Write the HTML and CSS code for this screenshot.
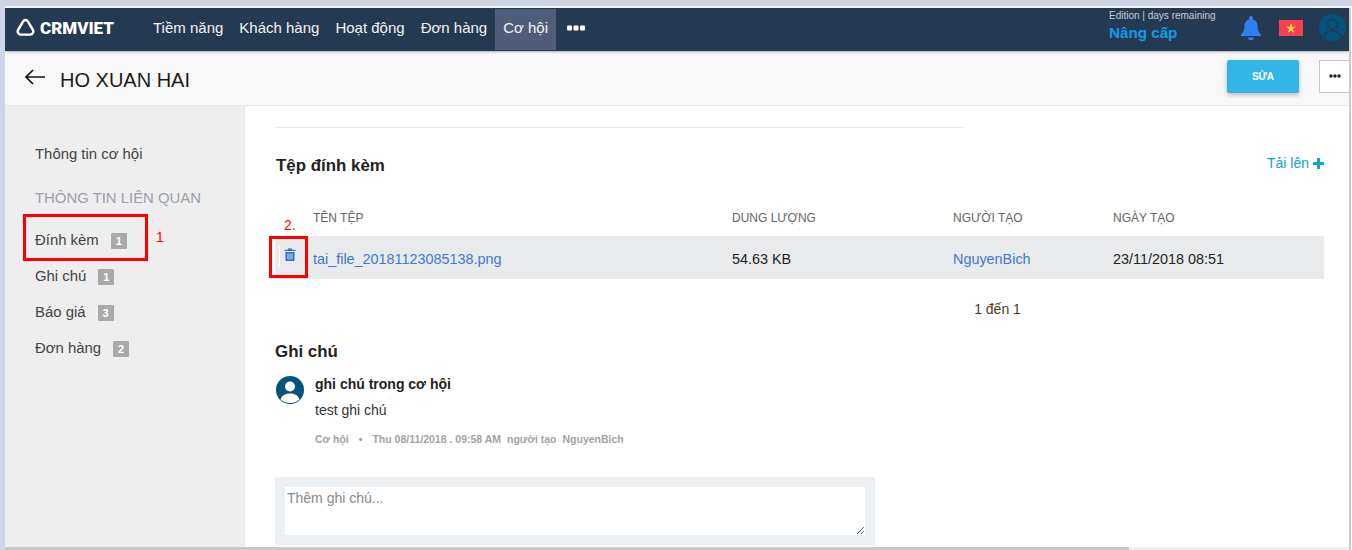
FILE: index.html
```html
<!DOCTYPE html>
<html lang="vi">
<head>
<meta charset="utf-8">
<title>CRMVIET</title>
<link rel="stylesheet" href="styles.css">
</head>
<body>
<div class="topstrip"></div>
<div class="app">
  <nav class="nav">
    <a class="logo">
      <svg class="logo-icon" width="19" height="19" viewBox="0 0 20 19"><path d="M10 1.6 C11.2 1.6 12 2.4 12.8 3.6 L17.6 11.6 C19 14.2 17.6 17 14.8 17 L5.2 17 C2.4 17 1 14.2 2.4 11.6 L7.2 3.6 C8 2.4 8.8 1.6 10 1.6 Z" fill="none" stroke="#fff" stroke-width="2.6"/></svg>
      <span class="logo-text">CRMVIET</span>
    </a>
    <div class="menu">
      <a class="menu-item">Tiềm năng</a>
      <a class="menu-item">Khách hàng</a>
      <a class="menu-item">Hoạt động</a>
      <a class="menu-item">Đơn hàng</a>
      <a class="menu-item active">Cơ hội</a>
      <a class="menu-item more"><svg width="18" height="6" viewBox="0 0 18 6"><rect x="0" y="0.5" width="5" height="5" rx="1" fill="#fff"/><rect x="6.5" y="0.5" width="5" height="5" rx="1" fill="#fff"/><rect x="13" y="0.5" width="5" height="5" rx="1" fill="#fff"/></svg></a>
    </div>
    <div class="nav-right">
      <div class="edition">
        <div class="edition-label">Edition | days remaining</div>
        <div class="upgrade">Nâng cấp</div>
      </div>
      <svg class="bell" width="22" height="26" viewBox="0 0 22 26"><path d="M11 1 C12.2 1 13 1.8 13 3 L13 4.4 C16.4 5.4 17.6 8.4 17.6 11.6 C17.6 15.6 19 17.6 21 19.4 L21 21 L1 21 L1 19.4 C3 17.6 4.4 15.6 4.4 11.6 C4.4 8.4 5.6 5.4 9 4.4 L9 3 C9 1.8 9.8 1 11 1 Z M8 22.4 L14 22.4 C14 24.2 12.6 25.2 11 25.2 C9.4 25.2 8 24.2 8 22.4 Z" fill="#2f7ff0"/></svg>
      <svg class="flag" width="24" height="16" viewBox="0 0 24 16"><rect width="24" height="16" fill="#f5424f"/><path d="M12 3 L13.2 6.7 L17 6.7 L13.9 9 L15.1 12.7 L12 10.4 L8.9 12.7 L10.1 9 L7 6.7 L10.8 6.7 Z" fill="#ffd84a"/></svg>
      <svg class="avatar-top" width="27" height="27" viewBox="0 0 27 27"><circle cx="13.5" cy="13.5" r="13.5" fill="#05527f"/><circle cx="13.5" cy="10.5" r="5" fill="none" stroke="#23394f" stroke-width="1.6"/><path d="M4.5 23 C6 18.4 9.5 17 13.5 17 C17.5 17 21 18.4 22.5 23" fill="none" stroke="#23394f" stroke-width="1.6"/></svg>
    </div>
  </nav>
  <header class="subheader">
    <div class="title-group">
      <svg class="back" width="22" height="16" viewBox="0 0 22 16"><path d="M21 8 L2 8 M9 1 L2 8 L9 15" fill="none" stroke="#111" stroke-width="1.7"/></svg>
      <h1 class="title">HO XUAN HAI</h1>
    </div>
    <div class="actions">
      <button class="btn-edit">SỬA</button>
      <button class="btn-more"><svg width="12" height="4" viewBox="0 0 12 4"><circle cx="2" cy="2" r="1.7" fill="#222"/><circle cx="6" cy="2" r="1.7" fill="#222"/><circle cx="10" cy="2" r="1.7" fill="#222"/></svg></button>
    </div>
  </header>
  <div class="body">
    <aside class="sidebar">
      <a class="side-link">Thông tin cơ hội</a>
      <div class="side-heading">THÔNG TIN LIÊN QUAN</div>
      <div class="side-list">
        <a class="side-item marked"><span>Đính kèm</span><span class="count">1</span><span class="mark-label mark-one">1</span></a>
        <a class="side-item"><span>Ghi chú</span><span class="count">1</span></a>
        <a class="side-item"><span>Báo giá</span><span class="count">3</span></a>
        <a class="side-item"><span>Đơn hàng</span><span class="count">2</span></a>
      </div>
    </aside>
    <main class="main">
      <div class="rule"></div>
      <div class="section-head">
        <h2 class="section-title">Tệp đính kèm</h2>
        <a class="upload">Tải lên <svg width="11" height="11" viewBox="0 0 11 11"><path d="M4 0 H7 V4 H11 V7 H7 V11 H4 V7 H0 V4 H4 Z" fill="#0fa9c7"/></svg></a>
      </div>
      <div class="files">
        <div class="file-row file-head">
          <span class="cell-act"></span>
          <span class="cell-name">TÊN TỆP</span>
          <span class="cell-size">DUNG LƯỢNG</span>
          <span class="cell-user">NGƯỜI TẠO</span>
          <span class="cell-date">NGÀY TẠO</span>
        </div>
        <div class="file-row file-data">
          <span class="cell-act">
            <span class="mark-label mark-two">2.</span>
            <span class="trash-box">
              <span class="tick"></span>
              <svg width="12" height="13" viewBox="0 0 12 13"><path d="M4 1.8 V0.6 H8 V1.8 H11.5 V3 H0.5 V1.8 Z M1.5 4 H10.5 V12 C10.5 12.6 10 13 9.5 13 H2.5 C2 13 1.5 12.6 1.5 12 Z" fill="#2f6fd0"/><path d="M4 5.5 V11.5 M6 5.5 V11.5 M8 5.5 V11.5" stroke="#e9eaec" stroke-width="0.9"/></svg>
            </span>
          </span>
          <a class="cell-name link">tai_file_20181123085138.png</a>
          <span class="cell-size">54.63 KB</span>
          <a class="cell-user link">NguyenBich</a>
          <span class="cell-date">23/11/2018 08:51</span>
        </div>
      </div>
      <div class="pager">1 đến 1</div>
      <h2 class="note-title">Ghi chú</h2>
      <div class="note">
        <svg class="note-avatar" width="28" height="28" viewBox="0 0 28 28"><circle cx="14" cy="14" r="14" fill="#05527f"/><circle cx="14" cy="10.5" r="5" fill="#fff"/><path d="M4.5 23.5 C6 18.6 10 17.4 14 17.4 C18 17.4 22 18.6 23.5 23.5 C21 26 17.5 27 14 27 C10.5 27 7 26 4.5 23.5 Z" fill="#fff"/></svg>
        <div class="note-body">
          <div class="note-head">ghi chú trong cơ hội</div>
          <div class="note-text">test ghi chú</div>
          <div class="note-meta"><span>Cơ hội</span><span class="dot">•</span><span>Thu 08/11/2018 . 09:58 AM</span><span>người tạo</span><span>NguyenBich</span></div>
        </div>
      </div>
      <div class="composer">
        <textarea class="composer-input" placeholder="Thêm ghi chú..."></textarea>
      </div>
    </main>
  </div>
  <div class="hscroll"><div class="hscroll-thumb"></div></div>
</div>
</body>
</html>
```
FILE: styles.css
```css
*, *::before, *::after { box-sizing: border-box; }
html, body { margin: 0; height: 100%; overflow: hidden; }
body {
  width: 1352px;
  height: 550px;
  background: #fff;
  font-family: "Liberation Sans", Arial, sans-serif;
  color: #222;
  border-left: 5px solid #ccd6e8;
  padding-right: 1px;
}
.topstrip { height: 8px; margin: 0 -1px 0 -5px; background: #ccd5e6; border-bottom: 2px solid #f4f5f8; }
.app { height: 542px; display: flex; flex-direction: column; background: #fff; overflow: hidden; border-right: 2px solid #ccc; }

.nav { height: 43px; flex: none; background: #243a52; display: flex; align-items: center; padding-bottom: 4px; color: #fff; box-shadow: 0 1px 2px rgba(0,0,0,.3); position: relative; z-index: 2; }
.logo { display: flex; align-items: center; width: 140px; padding-left: 11px; gap: 5px; }
.logo-text { font-family: Roboto, sans-serif; font-weight: 900; font-size: 17px; letter-spacing: 0; }
.menu { display: flex; align-items: stretch; height: 41px; margin-top: 1px; align-self: flex-start; }
.menu-item { display: flex; align-items: center; padding: 0 8px 4px; font-size: 15px; color: #f2f4f6; }
.menu-item.active { background: #505d7a; }
.menu-item.more { padding: 0 0 4px 11px; }
.nav-right { margin-left: auto; display: flex; align-items: center; padding-right: 3px; }
.edition { width: 132px; margin-top: -3px; padding-left: 1px; }
.edition-label { font-size: 10px; color: #c6cbd1; line-height: 11px; }
.upgrade { font-size: 15.2px; font-weight: 700; color: #0d9cec; line-height: 18px; margin-top: 3px; }
.bell { margin-right: 17px; }
.flag { margin-right: 16px; }

.subheader { height: 55px; flex: none; background: #f8f8f8; border-bottom: 1px solid #e8e8e8; display: flex; align-items: center; justify-content: space-between; }
.title-group { display: flex; align-items: center; padding: 4px 0 0 19px; gap: 14px; }
.back { margin-top: -6px; }
.title { margin: 0; font-size: 20px; font-weight: 400; color: #1c1c1c; }
.actions { display: flex; align-items: center; gap: 20px; padding-bottom: 4px; }
.btn-edit { width: 72px; height: 33px; border: 0; border-radius: 2px; background: #33b5e5; color: #fff; font: 700 10px "Liberation Sans", sans-serif; box-shadow: 0 2px 4px rgba(0,0,0,.25); padding: 0; }
.btn-more { width: 30px; height: 33px; border: 1px solid #c8c8c8; border-right: 0; background: #fff; padding: 0; display: flex; align-items: center; justify-content: center; }

.body { flex: 1; display: flex; min-height: 0; }
.sidebar { width: 240px; flex: none; background: #eee; border-right: 1px solid #e4e4e4; padding: 39px 0 0 30px; }
.side-link { display: block; font-size: 14.9px; line-height: 18px; color: #444; }
.side-heading { font-size: 14.9px; line-height: 18px; margin-top: 26px; color: #9aa0ac; }
.side-list { margin-top: 24px; display: flex; flex-direction: column; gap: 18px; }
.side-item { display: flex; align-items: center; gap: 12px; font-size: 14.9px; line-height: 18px; color: #444; position: relative; }
.count { background: #a9a9a9; color: #fff; font-size: 11px; font-weight: 700; width: 16px; height: 16px; border-radius: 1px; display: flex; align-items: center; justify-content: center; margin-top: 1px; }
.marked::before { content: ""; position: absolute; left: -12px; top: -17px; width: 125px; height: 47px; border: 3px solid #f00; }
.mark-label { color: #f00; font-size: 14px; line-height: 16px; position: absolute; }
.mark-one { left: 121px; top: -2px; }

.main { flex: 1; min-width: 0; padding: 21px 25px 0 30px; background: #fff; }
.rule { width: 689px; height: 1px; background: #eaeaea; }
.section-head { display: flex; justify-content: space-between; align-items: flex-start; margin-top: 28px; padding-left: 1px; }
.section-title { margin: 0; font-size: 16.9px; line-height: 20px; font-weight: 700; color: #222; }
.upload { font-size: 14px; line-height: 16px; color: #10a5c4; margin-top: -1px; display: flex; align-items: center; gap: 4px; }
.files { margin-top: 34px; }
.file-row { display: flex; align-items: center; }
.file-head { height: 26px; font-size: 12px; color: #666; align-items: flex-start; line-height: 14px; padding-top: 1px; }
.file-data { height: 43px; padding-top: 2px; background: #e9eaec; font-size: 14.4px; color: #222; }
.cell-act { width: 38px; flex: none; position: relative; align-self: stretch; }
.cell-name { width: 419px; flex: none; }
.cell-size { width: 221px; flex: none; }
.cell-user { width: 160px; flex: none; }
.cell-date { flex: 1; }
.link { color: #3a7bd5; }
.trash-box { position: absolute; left: -6px; top: -2px; width: 39px; height: 42px; border: 3px solid #f00; display: flex; justify-content: center; padding: 9px 0 0 3px; }
.tick { position: absolute; left: 7px; top: 7px; width: 1px; height: 20px; background: #fff; }
.mark-two { left: 9px; top: -21px; }
.pager { text-align: center; font-size: 14px; color: #4b3a24; margin-top: 21px; padding-left: 396px; line-height: 18px; width: 1049px; }
.note-title { margin: 24px 0 0; font-size: 16.9px; font-weight: 700; line-height: 20px; color: #222; }
.note { display: flex; gap: 11px; margin-top: 14px; padding-left: 1px; }
.note-avatar { flex: none; }
.note-head { font-size: 14px; font-weight: 700; line-height: 14px; color: #222; margin-top: 1px; }
.note-text { font-size: 14px; line-height: 18px; margin-top: 10px; color: #333; }
.note-meta { font-size: 10.5px; font-weight: 700; color: #a3a3a3; line-height: 12px; margin-top: 14px; display: flex; gap: 6px; }
.dot { margin: 0 4px; }
.composer { width: 600px; height: 68px; background: #edf0f3; margin-top: 32px; padding: 10px; }
.composer-input { display: block; width: 580px; height: 48px; border: 0; background: #fff; resize: vertical; padding: 3px 2px; font: 14px "Liberation Sans", sans-serif; outline: 0; }
.composer-input::placeholder { color: #8a8a8a; }
.hscroll { height: 3px; flex: none; background: #f0f0f0; }
.hscroll-thumb { width: 1124px; height: 3px; background: #c8c8c8; }
```
